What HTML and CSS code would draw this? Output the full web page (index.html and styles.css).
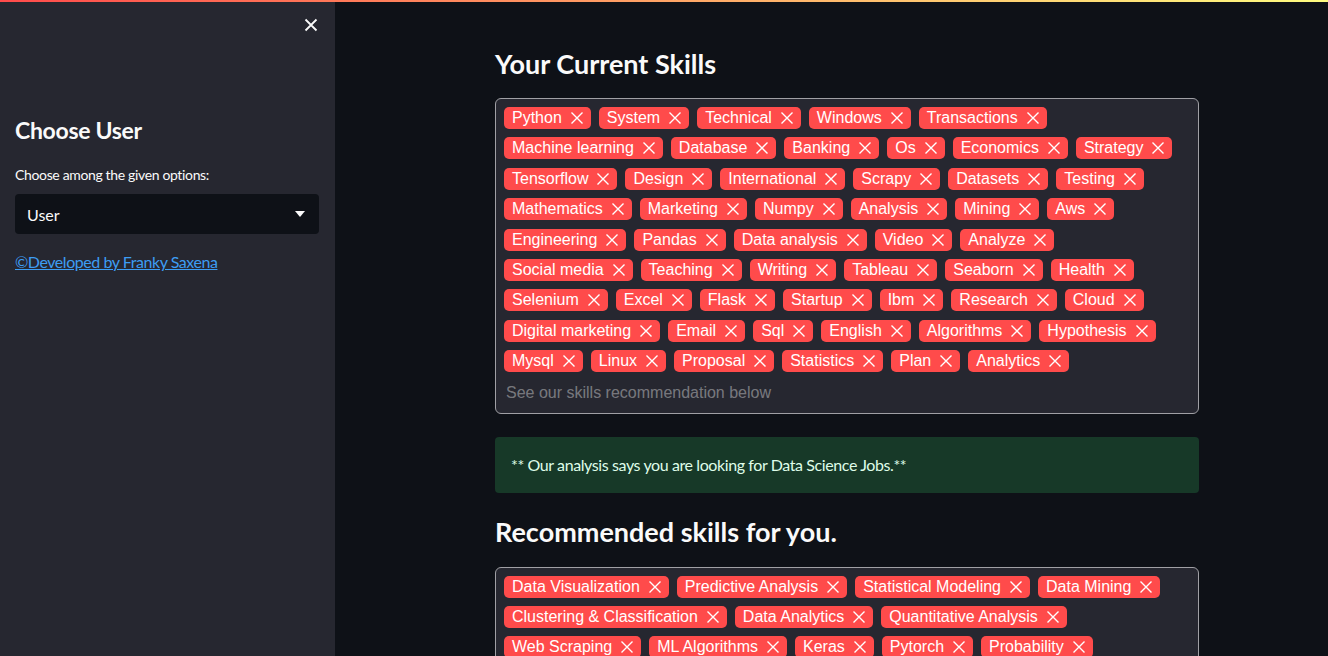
FILE: index.html
```html
<!DOCTYPE html>
<html lang="en">
<head>
<meta charset="utf-8">
<title>Skills Recommendation</title>
<link rel="stylesheet" href="styles.css">
</head>
<body>
<div class="decoration"></div>
<div class="app">
  <aside class="sidebar">
    <div class="sidebar-top">
      <button class="close-btn" aria-label="Close sidebar">
        <svg width="14" height="14" viewBox="0 0 14 14"><path d="M1.5 1.5 L12.5 12.5 M12.5 1.5 L1.5 12.5" stroke="#fafafa" stroke-width="1.8" fill="none"/></svg>
      </button>
    </div>
    <h2 class="side-title">Choose User</h2>
    <label class="side-label">Choose among the given options:</label>
    <div class="select">
      <span>User</span>
      <svg class="caret" width="10" height="6" viewBox="0 0 10 6"><path d="M0 0 L10 0 L5 6 Z" fill="#fafafa"/></svg>
    </div>
    <a class="dev-link" href="#">©Developed by Franky Saxena</a>
  </aside>
  <main class="main">
    <div class="content">
      <h2 class="section-title first">Your Current Skills</h2>
      <div class="multiselect">
        <div class="tags">
          <span class="tag">Python<svg viewBox="0 0 16 16"><path d="M2.5 2.5 L13.5 13.5 M13.5 2.5 L2.5 13.5"/></svg></span>
          <span class="tag">System<svg viewBox="0 0 16 16"><path d="M2.5 2.5 L13.5 13.5 M13.5 2.5 L2.5 13.5"/></svg></span>
          <span class="tag">Technical<svg viewBox="0 0 16 16"><path d="M2.5 2.5 L13.5 13.5 M13.5 2.5 L2.5 13.5"/></svg></span>
          <span class="tag">Windows<svg viewBox="0 0 16 16"><path d="M2.5 2.5 L13.5 13.5 M13.5 2.5 L2.5 13.5"/></svg></span>
          <span class="tag">Transactions<svg viewBox="0 0 16 16"><path d="M2.5 2.5 L13.5 13.5 M13.5 2.5 L2.5 13.5"/></svg></span>
          <span class="tag">Machine learning<svg viewBox="0 0 16 16"><path d="M2.5 2.5 L13.5 13.5 M13.5 2.5 L2.5 13.5"/></svg></span>
          <span class="tag">Database<svg viewBox="0 0 16 16"><path d="M2.5 2.5 L13.5 13.5 M13.5 2.5 L2.5 13.5"/></svg></span>
          <span class="tag">Banking<svg viewBox="0 0 16 16"><path d="M2.5 2.5 L13.5 13.5 M13.5 2.5 L2.5 13.5"/></svg></span>
          <span class="tag">Os<svg viewBox="0 0 16 16"><path d="M2.5 2.5 L13.5 13.5 M13.5 2.5 L2.5 13.5"/></svg></span>
          <span class="tag">Economics<svg viewBox="0 0 16 16"><path d="M2.5 2.5 L13.5 13.5 M13.5 2.5 L2.5 13.5"/></svg></span>
          <span class="tag">Strategy<svg viewBox="0 0 16 16"><path d="M2.5 2.5 L13.5 13.5 M13.5 2.5 L2.5 13.5"/></svg></span>
          <span class="tag">Tensorflow<svg viewBox="0 0 16 16"><path d="M2.5 2.5 L13.5 13.5 M13.5 2.5 L2.5 13.5"/></svg></span>
          <span class="tag">Design<svg viewBox="0 0 16 16"><path d="M2.5 2.5 L13.5 13.5 M13.5 2.5 L2.5 13.5"/></svg></span>
          <span class="tag">International<svg viewBox="0 0 16 16"><path d="M2.5 2.5 L13.5 13.5 M13.5 2.5 L2.5 13.5"/></svg></span>
          <span class="tag">Scrapy<svg viewBox="0 0 16 16"><path d="M2.5 2.5 L13.5 13.5 M13.5 2.5 L2.5 13.5"/></svg></span>
          <span class="tag">Datasets<svg viewBox="0 0 16 16"><path d="M2.5 2.5 L13.5 13.5 M13.5 2.5 L2.5 13.5"/></svg></span>
          <span class="tag">Testing<svg viewBox="0 0 16 16"><path d="M2.5 2.5 L13.5 13.5 M13.5 2.5 L2.5 13.5"/></svg></span>
          <span class="tag">Mathematics<svg viewBox="0 0 16 16"><path d="M2.5 2.5 L13.5 13.5 M13.5 2.5 L2.5 13.5"/></svg></span>
          <span class="tag">Marketing<svg viewBox="0 0 16 16"><path d="M2.5 2.5 L13.5 13.5 M13.5 2.5 L2.5 13.5"/></svg></span>
          <span class="tag">Numpy<svg viewBox="0 0 16 16"><path d="M2.5 2.5 L13.5 13.5 M13.5 2.5 L2.5 13.5"/></svg></span>
          <span class="tag">Analysis<svg viewBox="0 0 16 16"><path d="M2.5 2.5 L13.5 13.5 M13.5 2.5 L2.5 13.5"/></svg></span>
          <span class="tag">Mining<svg viewBox="0 0 16 16"><path d="M2.5 2.5 L13.5 13.5 M13.5 2.5 L2.5 13.5"/></svg></span>
          <span class="tag">Aws<svg viewBox="0 0 16 16"><path d="M2.5 2.5 L13.5 13.5 M13.5 2.5 L2.5 13.5"/></svg></span>
          <span class="tag">Engineering<svg viewBox="0 0 16 16"><path d="M2.5 2.5 L13.5 13.5 M13.5 2.5 L2.5 13.5"/></svg></span>
          <span class="tag">Pandas<svg viewBox="0 0 16 16"><path d="M2.5 2.5 L13.5 13.5 M13.5 2.5 L2.5 13.5"/></svg></span>
          <span class="tag">Data analysis<svg viewBox="0 0 16 16"><path d="M2.5 2.5 L13.5 13.5 M13.5 2.5 L2.5 13.5"/></svg></span>
          <span class="tag">Video<svg viewBox="0 0 16 16"><path d="M2.5 2.5 L13.5 13.5 M13.5 2.5 L2.5 13.5"/></svg></span>
          <span class="tag">Analyze<svg viewBox="0 0 16 16"><path d="M2.5 2.5 L13.5 13.5 M13.5 2.5 L2.5 13.5"/></svg></span>
          <span class="tag">Social media<svg viewBox="0 0 16 16"><path d="M2.5 2.5 L13.5 13.5 M13.5 2.5 L2.5 13.5"/></svg></span>
          <span class="tag">Teaching<svg viewBox="0 0 16 16"><path d="M2.5 2.5 L13.5 13.5 M13.5 2.5 L2.5 13.5"/></svg></span>
          <span class="tag">Writing<svg viewBox="0 0 16 16"><path d="M2.5 2.5 L13.5 13.5 M13.5 2.5 L2.5 13.5"/></svg></span>
          <span class="tag">Tableau<svg viewBox="0 0 16 16"><path d="M2.5 2.5 L13.5 13.5 M13.5 2.5 L2.5 13.5"/></svg></span>
          <span class="tag">Seaborn<svg viewBox="0 0 16 16"><path d="M2.5 2.5 L13.5 13.5 M13.5 2.5 L2.5 13.5"/></svg></span>
          <span class="tag">Health<svg viewBox="0 0 16 16"><path d="M2.5 2.5 L13.5 13.5 M13.5 2.5 L2.5 13.5"/></svg></span>
          <span class="tag">Selenium<svg viewBox="0 0 16 16"><path d="M2.5 2.5 L13.5 13.5 M13.5 2.5 L2.5 13.5"/></svg></span>
          <span class="tag">Excel<svg viewBox="0 0 16 16"><path d="M2.5 2.5 L13.5 13.5 M13.5 2.5 L2.5 13.5"/></svg></span>
          <span class="tag">Flask<svg viewBox="0 0 16 16"><path d="M2.5 2.5 L13.5 13.5 M13.5 2.5 L2.5 13.5"/></svg></span>
          <span class="tag">Startup<svg viewBox="0 0 16 16"><path d="M2.5 2.5 L13.5 13.5 M13.5 2.5 L2.5 13.5"/></svg></span>
          <span class="tag">Ibm<svg viewBox="0 0 16 16"><path d="M2.5 2.5 L13.5 13.5 M13.5 2.5 L2.5 13.5"/></svg></span>
          <span class="tag">Research<svg viewBox="0 0 16 16"><path d="M2.5 2.5 L13.5 13.5 M13.5 2.5 L2.5 13.5"/></svg></span>
          <span class="tag">Cloud<svg viewBox="0 0 16 16"><path d="M2.5 2.5 L13.5 13.5 M13.5 2.5 L2.5 13.5"/></svg></span>
          <span class="tag">Digital marketing<svg viewBox="0 0 16 16"><path d="M2.5 2.5 L13.5 13.5 M13.5 2.5 L2.5 13.5"/></svg></span>
          <span class="tag">Email<svg viewBox="0 0 16 16"><path d="M2.5 2.5 L13.5 13.5 M13.5 2.5 L2.5 13.5"/></svg></span>
          <span class="tag">Sql<svg viewBox="0 0 16 16"><path d="M2.5 2.5 L13.5 13.5 M13.5 2.5 L2.5 13.5"/></svg></span>
          <span class="tag">English<svg viewBox="0 0 16 16"><path d="M2.5 2.5 L13.5 13.5 M13.5 2.5 L2.5 13.5"/></svg></span>
          <span class="tag">Algorithms<svg viewBox="0 0 16 16"><path d="M2.5 2.5 L13.5 13.5 M13.5 2.5 L2.5 13.5"/></svg></span>
          <span class="tag">Hypothesis<svg viewBox="0 0 16 16"><path d="M2.5 2.5 L13.5 13.5 M13.5 2.5 L2.5 13.5"/></svg></span>
          <span class="tag">Mysql<svg viewBox="0 0 16 16"><path d="M2.5 2.5 L13.5 13.5 M13.5 2.5 L2.5 13.5"/></svg></span>
          <span class="tag">Linux<svg viewBox="0 0 16 16"><path d="M2.5 2.5 L13.5 13.5 M13.5 2.5 L2.5 13.5"/></svg></span>
          <span class="tag">Proposal<svg viewBox="0 0 16 16"><path d="M2.5 2.5 L13.5 13.5 M13.5 2.5 L2.5 13.5"/></svg></span>
          <span class="tag">Statistics<svg viewBox="0 0 16 16"><path d="M2.5 2.5 L13.5 13.5 M13.5 2.5 L2.5 13.5"/></svg></span>
          <span class="tag">Plan<svg viewBox="0 0 16 16"><path d="M2.5 2.5 L13.5 13.5 M13.5 2.5 L2.5 13.5"/></svg></span>
          <span class="tag">Analytics<svg viewBox="0 0 16 16"><path d="M2.5 2.5 L13.5 13.5 M13.5 2.5 L2.5 13.5"/></svg></span>
        </div>
        <div class="placeholder">See our skills recommendation below</div>
      </div>
      <div class="success">** Our analysis says you are looking for Data Science Jobs.**</div>
      <h2 class="section-title second">Recommended skills for you.</h2>
      <div class="multiselect">
        <div class="tags">
          <span class="tag">Data Visualization<svg viewBox="0 0 16 16"><path d="M2.5 2.5 L13.5 13.5 M13.5 2.5 L2.5 13.5"/></svg></span>
          <span class="tag">Predictive Analysis<svg viewBox="0 0 16 16"><path d="M2.5 2.5 L13.5 13.5 M13.5 2.5 L2.5 13.5"/></svg></span>
          <span class="tag">Statistical Modeling<svg viewBox="0 0 16 16"><path d="M2.5 2.5 L13.5 13.5 M13.5 2.5 L2.5 13.5"/></svg></span>
          <span class="tag">Data Mining<svg viewBox="0 0 16 16"><path d="M2.5 2.5 L13.5 13.5 M13.5 2.5 L2.5 13.5"/></svg></span>
          <span class="tag">Clustering &amp; Classification<svg viewBox="0 0 16 16"><path d="M2.5 2.5 L13.5 13.5 M13.5 2.5 L2.5 13.5"/></svg></span>
          <span class="tag">Data Analytics<svg viewBox="0 0 16 16"><path d="M2.5 2.5 L13.5 13.5 M13.5 2.5 L2.5 13.5"/></svg></span>
          <span class="tag">Quantitative Analysis<svg viewBox="0 0 16 16"><path d="M2.5 2.5 L13.5 13.5 M13.5 2.5 L2.5 13.5"/></svg></span>
          <span class="tag">Web Scraping<svg viewBox="0 0 16 16"><path d="M2.5 2.5 L13.5 13.5 M13.5 2.5 L2.5 13.5"/></svg></span>
          <span class="tag">ML Algorithms<svg viewBox="0 0 16 16"><path d="M2.5 2.5 L13.5 13.5 M13.5 2.5 L2.5 13.5"/></svg></span>
          <span class="tag">Keras<svg viewBox="0 0 16 16"><path d="M2.5 2.5 L13.5 13.5 M13.5 2.5 L2.5 13.5"/></svg></span>
          <span class="tag">Pytorch<svg viewBox="0 0 16 16"><path d="M2.5 2.5 L13.5 13.5 M13.5 2.5 L2.5 13.5"/></svg></span>
          <span class="tag">Probability<svg viewBox="0 0 16 16"><path d="M2.5 2.5 L13.5 13.5 M13.5 2.5 L2.5 13.5"/></svg></span>
        </div>
      </div>
    </div>
  </main>
</div>
</body>
</html>
```

FILE: styles.css
```css
* { box-sizing: border-box; }
html, body {
  margin: 0;
  padding: 0;
  height: 100%;
  overflow: hidden;
}
body {
  background: #0e1117;
  color: #fafafa;
  font-family: "Lato", "Open Sans", sans-serif;
}
.decoration {
  position: fixed;
  top: 0;
  left: 0;
  right: 0;
  height: 2px;
  background: linear-gradient(90deg, #ff4b4b, #fffd80);
  z-index: 10;
}
.app {
  display: flex;
  height: 656px;
}
.sidebar {
  width: 335px;
  flex: none;
  background: #262730;
  padding: 0 16px 0 15px;
  display: flex;
  flex-direction: column;
}
.sidebar-top {
  display: flex;
  justify-content: flex-end;
  padding-top: 18px;
  height: 104px;
}
.close-btn {
  background: none;
  border: none;
  padding: 0;
  width: 14px;
  height: 14px;
  margin-right: 1px;
  cursor: pointer;
  display: flex;
}
.side-title {
  margin: 0;
  font-size: 23px;
  letter-spacing: -0.3px;
  font-weight: 700;
  line-height: 1.2;
  height: 44px;
  padding-top: 13px;
}
.side-label {
  font-size: 14px;
  letter-spacing: -0.35px;
  line-height: 20px;
  margin-top: 17px;
  height: 29px;
  display: block;
}
.select {
  height: 40px;
  background: #0e1117;
  border-radius: 4px;
  display: flex;
  align-items: center;
  justify-content: space-between;
  padding: 0 14px 0 12px;
  font-size: 16px;
}
.caret { display: block; }
.dev-link {
  margin-top: 17px;
  color: #3d9df3;
  text-decoration: underline;
  font-size: 16px;
  letter-spacing: -0.45px;
  line-height: 22px;
  width: max-content;
}
.main {
  flex: 1;
  padding-left: 160px;
}
.content {
  width: 704px;
}
.section-title {
  margin: 0;
  font-size: 27px;
  font-weight: 700;
  line-height: 36px;
}
.section-title.first { margin-top: 46px; height: 52px; }
.section-title.second { margin-top: 21px; height: 53px; }
.multiselect {
  border: 1px solid #a0a0a5;
  border-radius: 6px;
  background: #262730;
  padding: 4px 12px 4px 4px;
}
.tags {
  display: flex;
  flex-wrap: wrap;
}
.tag {
  display: inline-flex;
  align-items: center;
  height: 22px;
  margin: 4px 4px 4.4px;
  padding: 0 6px 0 8px;
  background: #ff4b4b;
  border-radius: 5px;
  color: #ffffff;
  font-family: "Liberation Sans", Arial, sans-serif;
  font-size: 16px;
  white-space: nowrap;
}
.tag svg {
  width: 16px;
  height: 16px;
  margin-left: 7px;
  fill: none;
  stroke: #ffffff;
  stroke-width: 1.4;
}
.placeholder {
  font-family: "Liberation Sans", Arial, sans-serif;
  font-size: 16px;
  color: rgba(250, 250, 250, 0.4);
  padding: 6px 6px 6px;
  line-height: 20px;
}
.success {
  margin-top: 23px;
  height: 56px;
  background: #173928;
  border-radius: 4px;
  color: #dffde9;
  font-size: 16px;
  letter-spacing: -0.4px;
  padding: 0 16px;
  display: flex;
  align-items: center;
}
```
